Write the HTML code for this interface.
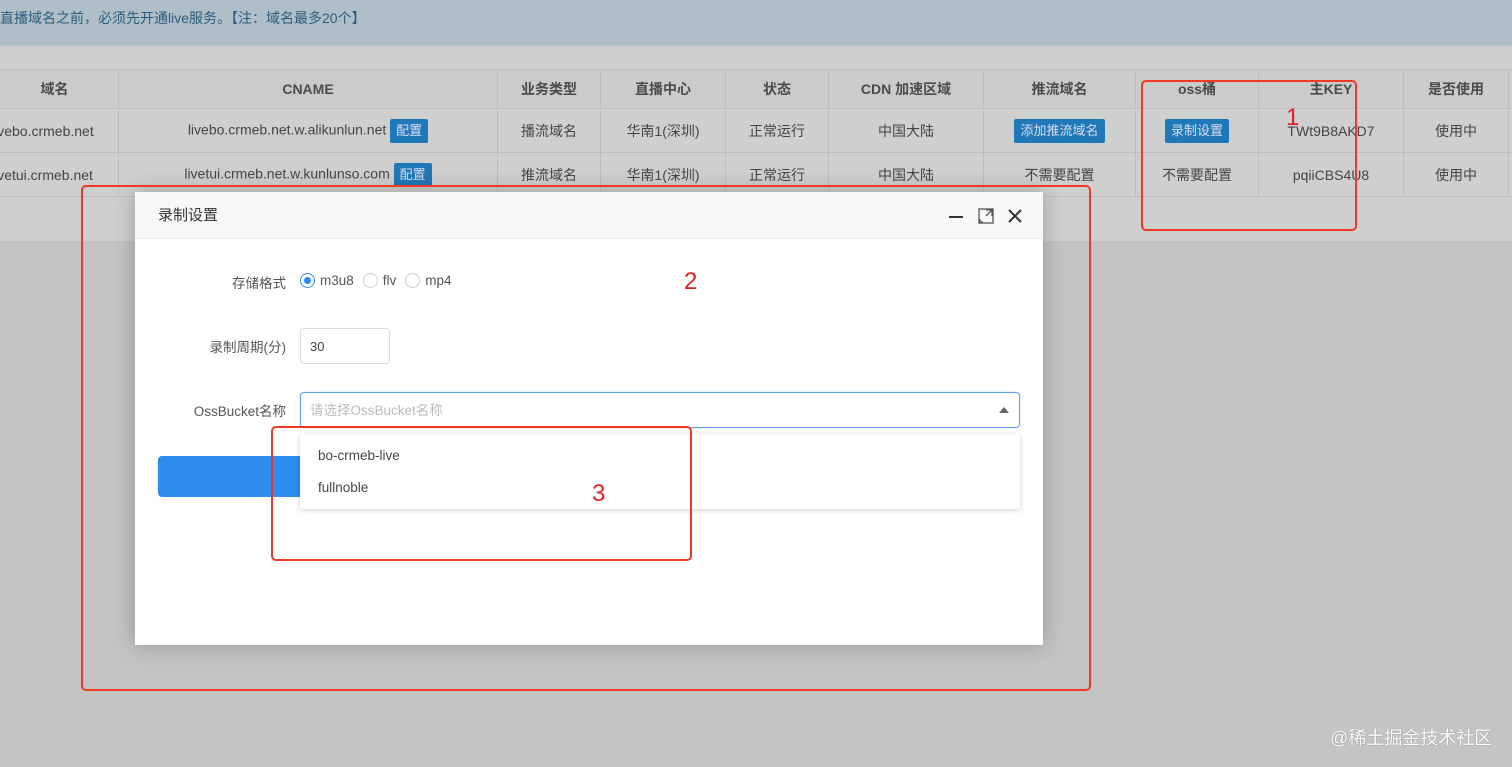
<!DOCTYPE html>
<html><head><meta charset="utf-8"><style>
*{margin:0;padding:0;box-sizing:border-box}
body{width:1512px;height:767px;overflow:hidden;background:#c4c4c4;font-family:"Liberation Sans","Noto Sans CJK SC",sans-serif;position:relative;font-size:14px;color:#333}
.banner{position:absolute;left:0;top:0;width:1512px;height:45px;background:#b0bec7;border-bottom:1px solid #a6c4c4;color:#2a5d7d;font-size:14px;line-height:36px;padding-left:0}
.area{position:absolute;left:0;top:46px;width:1512px;height:195px;background:#cfcfcf}
table{position:absolute;left:-10px;top:69px;border-collapse:collapse;font-size:14px;color:#444;table-layout:fixed;width:1538px}
td,th{border:1px solid #bdbdbd;text-align:center;height:44px;white-space:nowrap;overflow:hidden}
th{height:39px;font-weight:bold;color:#4a4a4a;background:#cbcbcb}
.b{display:inline-block;background:#1f78b8;color:#dde;font-size:13px;padding:0 6px;height:24px;line-height:24px;border-radius:2px;vertical-align:middle}
.modal{position:absolute;left:135px;top:192px;width:908px;height:453px;background:#fff;box-shadow:0 0 20px rgba(0,0,0,.25)}
.mh{height:47px;background:#f8f8f8;border-bottom:1px solid #eee;line-height:47px;padding-left:23px;font-size:15px;color:#333}
.lbl{position:absolute;right:757px;font-size:13.5px;color:#555;text-align:right;white-space:nowrap}
.red{position:absolute;border:2.5px solid #ee3b20;border-radius:5px}
.rn{position:absolute;color:#e02020;font-size:24px}
</style></head><body>
<div class="banner">直播域名之前，必须先开通live服务。【注：域名最多20个】</div>
<div class="area"></div>
<table>
<colgroup><col style="width:128px"><col style="width:379px"><col style="width:103px"><col style="width:125px"><col style="width:103px"><col style="width:155px"><col style="width:152px"><col style="width:123px"><col style="width:145px"><col style="width:105px"><col style="width:20px"></colgroup>
<tr><th>域名</th><th>CNAME</th><th>业务类型</th><th>直播中心</th><th>状态</th><th>CDN 加速区域</th><th>推流域名</th><th>oss桶</th><th>主KEY</th><th>是否使用</th><th></th></tr>
<tr><td style="text-align:right;padding-right:30px">livebo.crmeb.net</td><td>livebo.crmeb.net.w.alikunlun.net <span class="b">配置</span></td><td>播流域名</td><td>华南1(深圳)</td><td>正常运行</td><td>中国大陆</td><td><span class="b">添加推流域名</span></td><td><span class="b">录制设置</span></td><td>TWt9B8AKD7</td><td>使用中</td><td></td></tr>
<tr><td style="text-align:right;padding-right:30px">livetui.crmeb.net</td><td>livetui.crmeb.net.w.kunlunso.com <span class="b">配置</span></td><td>推流域名</td><td>华南1(深圳)</td><td>正常运行</td><td>中国大陆</td><td>不需要配置</td><td>不需要配置</td><td>pqiiCBS4U8</td><td>使用中</td><td></td></tr>
</table>
<div class="modal">
<div class="mh">录制设置
<svg style="position:absolute;left:812px;top:14px" width="80" height="20"><line x1="2" y1="11" x2="16" y2="11" stroke="#333" stroke-width="2"/><rect x="32" y="3" width="14" height="14" fill="none" stroke="#555" stroke-width="1.3"/><path d="M39 4h6v6M45 4l-6 6M33 13v3h3" stroke="#555" fill="none" stroke-width="1.3"/><path d="M62 4l12 12M74 4l-12 12" stroke="#333" stroke-width="2"/></svg></div>
<div class="lbl" style="top:80px">存储格式</div>
<div style="position:absolute;left:165px;top:81px;font-size:13.5px;color:#555;display:flex;align-items:center;gap:5px">
<span style="width:15px;height:15px;border:1px solid #2d8cf0;border-radius:50%;display:inline-block;position:relative"><span style="position:absolute;left:3px;top:3px;width:7px;height:7px;border-radius:50%;background:#2d8cf0"></span></span>m3u8
<span style="width:15px;height:15px;border:1px solid #ccc;border-radius:50%;display:inline-block;margin-left:4px"></span>flv
<span style="width:15px;height:15px;border:1px solid #ccc;border-radius:50%;display:inline-block;margin-left:4px"></span>mp4</div>
<div class="lbl" style="top:144px">录制周期(分)</div>
<div style="position:absolute;left:165px;top:136px;width:90px;height:36px;border:1px solid #ddd;border-radius:4px;font-size:13px;line-height:36px;padding-left:9px;color:#444">30</div>
<div class="lbl" style="top:208px">OssBucket名称</div>
<div style="position:absolute;left:165px;top:200px;width:720px;height:36px;border:1px solid #5ca0f0;border-radius:4px;font-size:13.5px;line-height:36px;padding-left:9px;color:#bbb;box-shadow:0 0 2px rgba(45,140,240,.3)">请选择OssBucket名称<span style="position:absolute;right:10px;top:14px;border:5px solid transparent;border-bottom:6px solid #666;border-top:0"></span></div>
<div style="position:absolute;left:23px;top:264px;width:300px;height:41px;background:#2d8cf0;border-radius:4px"></div>
<div style="position:absolute;left:165px;top:242px;width:720px;height:75px;background:#fff;box-shadow:0 1px 6px rgba(0,0,0,.2);border-radius:3px;font-size:13.5px;color:#444">
<div style="position:absolute;left:18px;top:14px">bo-crmeb-live</div><div style="position:absolute;left:18px;top:46px">fullnoble</div></div>
</div>
<div class="red" style="left:1141px;top:80px;width:216px;height:151px"></div>
<div class="red" style="left:81px;top:185px;width:1010px;height:506px"></div>
<div class="red" style="left:271px;top:426px;width:421px;height:135px"></div>
<div class="rn" style="left:1286px;top:104px">1</div>
<div class="rn" style="left:684px;top:268px">2</div>
<div class="rn" style="left:592px;top:480px">3</div>
<div style="position:absolute;left:1330px;top:724px;color:#fff;font-size:18px;text-shadow:0 0 1px #666">@稀土掘金技术社区</div>
</body></html>
